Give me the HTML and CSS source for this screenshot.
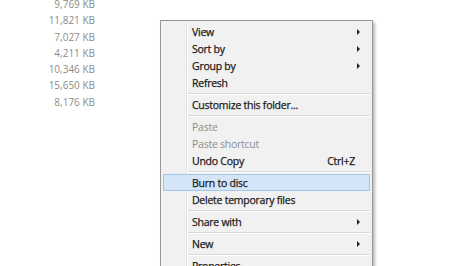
FILE: index.html
```html
<!DOCTYPE html>
<html lang="en">
<head>
    <meta charset="UTF-8">
    <title>Context menu</title>
    <link rel="stylesheet" href="styles.css">
</head>
<body>
    <!-- File size column from the details view -->
    <div class="sizes">
        <span>9,769 KB</span>
        <span>11,821 KB</span>
        <span>7,027 KB</span>
        <span>4,211 KB</span>
        <span>10,346 KB</span>
        <span>15,650 KB</span>
        <span>8,176 KB</span>
    </div>

    <!-- Right-click menu -->
    <ul class="menu">
        <li class="item">View<span class="arrow"></span></li>
        <li class="item">Sort by<span class="arrow"></span></li>
        <li class="item">Group by<span class="arrow"></span></li>
        <li class="item">Refresh</li>
        <li class="sep"></li>
        <li class="item">Customize this folder...</li>
        <li class="sep"></li>
        <li class="item disabled">Paste</li>
        <li class="item disabled">Paste shortcut</li>
        <li class="item">Undo Copy<span class="key">Ctrl+Z</span></li>
        <li class="sep"></li>
        <li class="item hover">Burn to disc</li>
        <li class="item">Delete temporary files</li>
        <li class="sep"></li>
        <li class="item">Share with<span class="arrow"></span></li>
        <li class="sep"></li>
        <li class="item">New<span class="arrow"></span></li>
        <li class="sep"></li>
        <li class="item">Properties</li>
    </ul>
</body>
</html>
```

FILE: styles.css
```css
:root {
    --menu-bg: #f1f1f1;
    --menu-border: #979797;
    --text-color: #1a1a1a;
    --muted: #8c8c8c;
}

body {
    margin: 0;
    background: #fff;
    font-family: 'Open Sans', 'Liberation Sans', sans-serif;
    overflow: hidden;
    height: 266px;
}

/* size column */
.sizes {
    width: 95px;
    display: flex;
    flex-direction: column;
    align-items: flex-end;
    margin-top: -4px;
    font-size: 10px;
    color: var(--muted);
}

.sizes span {
    height: 16.3px;
    line-height: 16px;
}

/* context menu */
.menu {
    position: absolute;
    left: 160px;
    top: 20px;
    width: 207px;
    margin: 0;
    padding: 2px 2px 10px 2px;
    list-style: none;
    background: var(--menu-bg);
    border: 1px solid var(--menu-border);
    box-shadow: 2px 2px 3px rgba(0, 0, 0, 0.28);
    font-size: 10.5px;
    letter-spacing: -0.25px;
    color: var(--text-color);
    -webkit-text-stroke: 0.25px;
}

/* icon gutter line */
.menu::before {
    content: '';
    position: absolute;
    left: 25px;
    top: 0;
    bottom: 0;
    width: 1px;
    background: #e2e3e3;
    border-right: 1px solid #fff;
}

.item {
    position: relative;
    height: 17px;
    line-height: 17px;
    padding-left: 28px;
    border: 1px solid transparent;
    box-sizing: border-box;
    white-space: nowrap;
}

.item.disabled {
    color: #8d8d8d;
    -webkit-text-stroke: 0;
}

.item.hover {
    background: #d3e5f7;
    border-color: #a4c5e8;
}

.sep {
    position: relative;
    height: 0;
    margin: 2px 0 1px 25px;
    border-top: 1px solid #d8d8d8;
    border-bottom: 1px solid #fff;
}

.arrow {
    position: absolute;
    right: 9px;
    top: 5px;
    width: 0;
    height: 0;
    border-top: 3px solid transparent;
    border-bottom: 3px solid transparent;
    border-left: 3px solid #222;
}

.key {
    position: absolute;
    right: 14px;
    top: 0;
}
```
